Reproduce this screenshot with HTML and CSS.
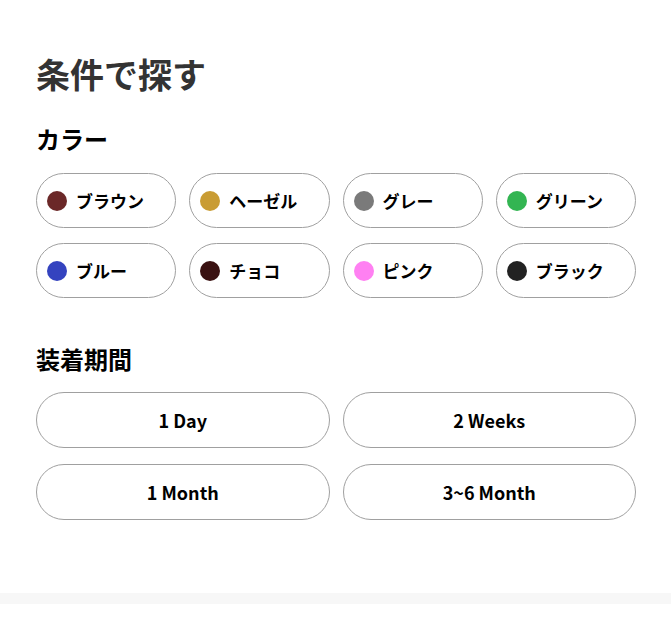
FILE: index.html
```html
<!DOCTYPE html>
<html lang="ja">
<head>
  <meta charset="UTF-8" />
  <meta name="viewport" content="width=device-width, initial-scale=1" />
  <title>条件で探す</title>
  <link rel="stylesheet" href="styles.css">
</head>
<body>
  <div class="search">
    <h1>条件で探す</h1>

    <h2>カラー</h2>
    <div class="colors">
      <button class="chip"><span class="dot" style="background:#6b2828"></span>ブラウン</button>
      <button class="chip"><span class="dot" style="background:#c99c33"></span>ヘーゼル</button>
      <button class="chip"><span class="dot" style="background:#7a7a7a"></span>グレー</button>
      <button class="chip"><span class="dot" style="background:#33b552"></span>グリーン</button>
      <button class="chip"><span class="dot" style="background:#3443bf"></span>ブルー</button>
      <button class="chip"><span class="dot" style="background:#3a1111"></span>チョコ</button>
      <button class="chip"><span class="dot" style="background:#ff80f2"></span>ピンク</button>
      <button class="chip"><span class="dot" style="background:#222222"></span>ブラック</button>
    </div>

    <h2 class="period-title">装着期間</h2>
    <div class="periods">
      <button class="period">1 Day</button>
      <button class="period">2 Weeks</button>
      <button class="period">1 Month</button>
      <button class="period">3~6 Month</button>
    </div>
  </div>
  <div class="divider"></div>
</body>
</html>
```

FILE: styles.css
```css
body {
  margin: 0;
  font-family: "Noto Sans CJK JP", "Noto Sans", sans-serif;
  background: #fff;
  color: #000;
}
.search {
  padding: 50px 35px 73px 36px;
}
h1 {
  margin: 0;
  font-size: 34px;
  line-height: 48px;
  font-weight: 700;
  color: #333;
}
h2 {
  margin: 26px 0 0;
  font-size: 24px;
  line-height: 30px;
  font-weight: 700;
}
.colors {
  display: grid;
  grid-template-columns: repeat(4, 1fr);
  column-gap: 13px;
  row-gap: 15px;
  margin-top: 19px;
}
.chip,
.period {
  font-family: inherit;
  font-weight: 700;
  color: #000;
  background: #fff;
  border: 1px solid #a0a0a0;
  border-radius: 28px;
  height: 55px;
  cursor: pointer;
}
.chip {
  display: flex;
  align-items: center;
  gap: 9px;
  padding: 0 0 0 10px;
  font-size: 17px;
  text-align: left;
}
.dot {
  width: 20px;
  height: 20px;
  border-radius: 50%;
  flex-shrink: 0;
}
.period-title {
  margin-top: 46px;
}
.periods {
  display: grid;
  grid-template-columns: 1fr 1fr;
  column-gap: 13px;
  row-gap: 16px;
  margin-top: 18px;
}
.period {
  height: 56px;
  font-size: 18px;
}
.divider {
  height: 11px;
  background: #f7f7f7;
}
```
